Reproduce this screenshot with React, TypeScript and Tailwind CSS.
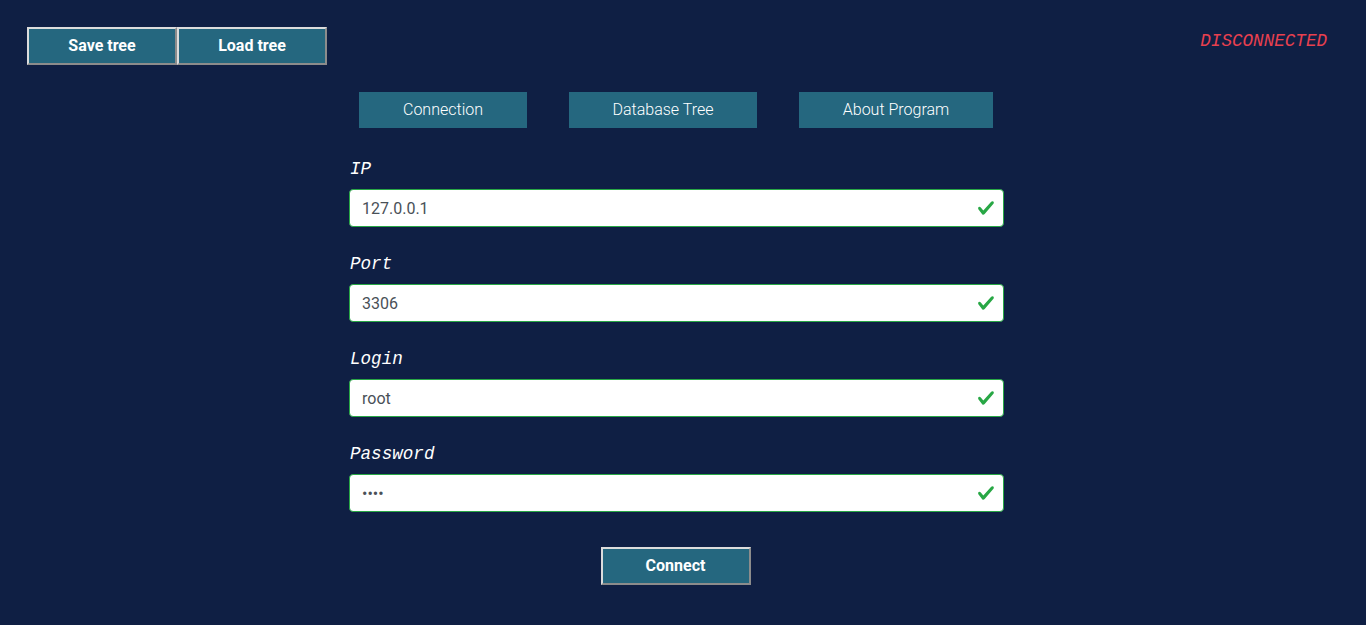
import React from "react";

const fields = [
  { label: "IP", value: "127.0.0.1", type: "text" },
  { label: "Port", value: "3306", type: "text" },
  { label: "Login", value: "root", type: "text" },
  { label: "Password", value: "root", type: "password" },
];

function Check() {
  return (
    <svg viewBox="0 0 8 8" className="absolute right-[9px] top-1/2 -translate-y-1/2 w-[18px] h-[18px]">
      <path
        fill="#28a745"
        d="M2.3 6.73L.6 4.53c-.4-1.04.46-1.4 1.1-.8l1.1 1.4 3.4-3.8c.6-.63 1.6-.27 1.2.7l-4 4.6c-.43.5-.8.4-1.1.1z"
      />
    </svg>
  );
}

const bevel =
  "border-2 border-t-[#dcdcdc] border-l-[#dcdcdc] border-r-[#8c8c8c] border-b-[#8c8c8c] bg-[#25677f] text-white font-bold text-[16px]";

const tab = "h-[36px] bg-[#25677f] font-light text-[16px] text-white";

export default function App() {
  return (
    <div
      className="min-h-[625px] w-full bg-[#0f1f44] text-white"
      style={{ fontFamily: "Roboto, 'Liberation Sans', sans-serif" }}
    >
      {/* top bar */}
      <div className="flex items-start justify-between pl-[27px] pr-[39px] pt-[27px]">
        <div className="flex">
          <button className={`${bevel} w-[150px] h-[38px]`}>Save tree</button>
          <button className={`${bevel} w-[150px] h-[38px]`}>Load tree</button>
        </div>
        <div
          className="mt-px italic font-normal text-[#e8404f] text-[17.6px]"
          style={{ fontFamily: "'Liberation Mono', 'Courier New', monospace" }}
        >
          DISCONNECTED
        </div>
      </div>

      {/* form column */}
      <div className="ml-[349px] w-[655px] pt-[27px]">
        <div className="flex justify-center gap-[42px] pr-px">
          <button className={`${tab} w-[168px]`}>Connection</button>
          <button className={`${tab} w-[188px]`}>Database Tree</button>
          <button className={`${tab} w-[194px]`}>About Program</button>
        </div>

        <div className="mt-[28px] flex flex-col gap-[24px]">
          {fields.map((f) => (
            <div key={f.label}>
              <div
                className="h-6 leading-[26px] pl-px italic text-[17.6px] text-white"
                style={{ fontFamily: "'Liberation Mono', 'Courier New', monospace" }}
              >
                {f.label}
              </div>
              <div className="relative mt-[9px]">
                <input
                  readOnly
                  type={f.type}
                  value={f.value}
                  className="w-full h-[38px] rounded-[4px] border border-[#28a745] bg-white pl-3 pr-9 text-[16px] text-[#495057] outline-none"
                />
                <Check />
              </div>
            </div>
          ))}
        </div>

        <div className="mt-[35px] flex justify-center">
          <button className={`${bevel} w-[150px] h-[38px] mr-[2px]`}>Connect</button>
        </div>
      </div>
    </div>
  );
}
